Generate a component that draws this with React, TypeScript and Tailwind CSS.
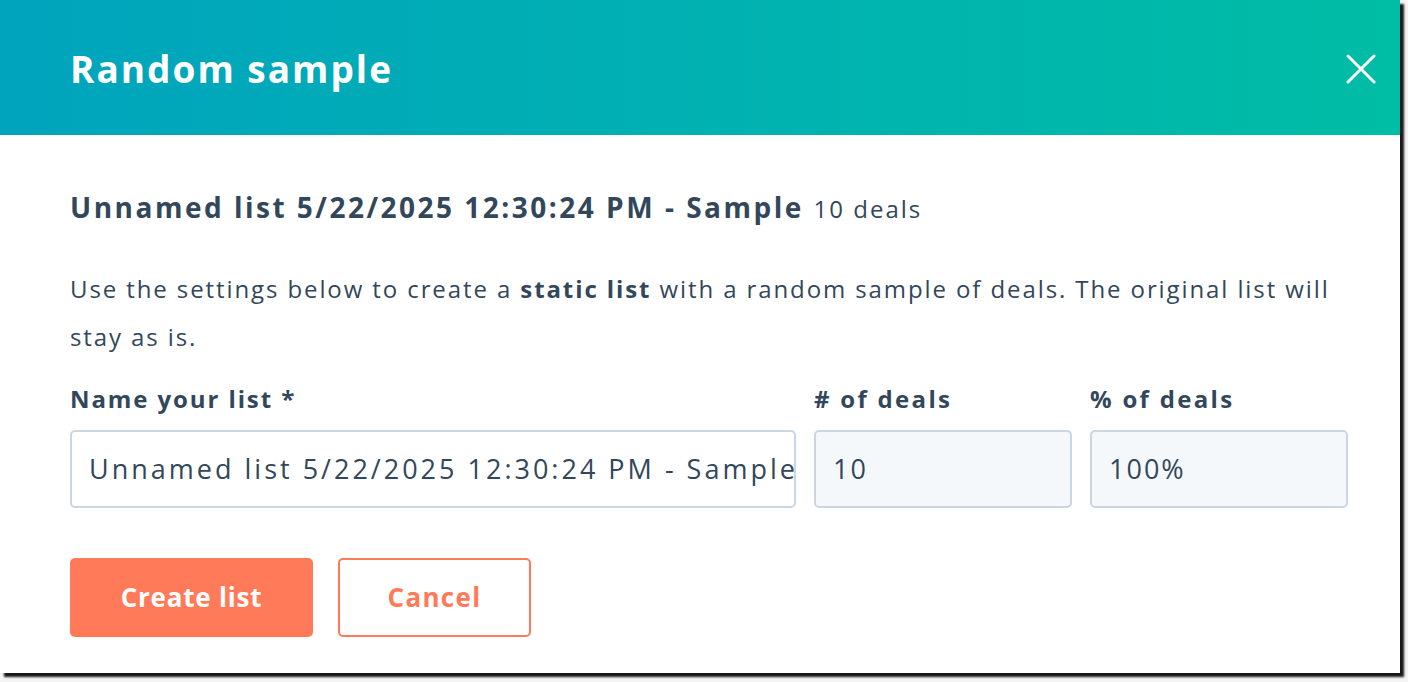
const font = { fontFamily: '"Open Sans", "Noto Sans", sans-serif' };

const CloseIcon = () => (
  <svg width="30" height="30" viewBox="0 0 30 30" fill="none" stroke="white" strokeWidth="3" strokeLinecap="round">
    <line x1="2" y1="2" x2="28" y2="28" />
    <line x1="28" y1="2" x2="2" y2="28" />
  </svg>
);

const App = () => {
  return (
    <div className="w-[1408px] h-[682px] bg-[#f4f4f4]" style={font}>
      <div className="w-[1400px] h-[673px] bg-white flex flex-col shadow-[4px_4px_2px_rgba(0,0,0,0.9)]">
        {/* Header */}
        <header className="h-[135px] shrink-0 flex items-center justify-between pl-[70px] pr-[24px] pt-[2px] bg-gradient-to-r from-[#00a4bd] to-[#00bda5]">
          <h1 className="text-[37px] font-bold text-white tracking-[2px]">Random sample</h1>
          <CloseIcon />
        </header>

        {/* Body */}
        <div className="pl-[70px] pr-[52px] pt-[54px] text-[#33475b]">
          <h2 className="text-[28px] font-bold leading-[36px] tracking-[2.5px] whitespace-nowrap">
            Unnamed list 5/22/2025 12:30:24 PM - Sample{' '}
            <span className="text-[24px] font-normal tracking-[2px]">10 deals</span>
          </h2>

          <p className="mt-[38px] text-[24px] leading-[48px] tracking-[1.9px]">
            Use the settings below to create a <span className="font-bold">static list</span> with a random sample of deals. The original list will stay as is.
          </p>

          <div className="mt-[22px] grid grid-cols-[726px_258px_258px] gap-x-[18px]">
            <div className="flex flex-col">
              <label className="text-[24px] font-bold leading-[32px] mb-[15px] tracking-[1.9px]">Name your list *</label>
              <div className="h-[78px] rounded-[5px] border-2 border-[#cbd6e2] bg-white flex items-center px-[17px] overflow-hidden">
                <span className="text-[27px] whitespace-nowrap tracking-[3px]">Unnamed list 5/22/2025 12:30:24 PM - Sample</span>
              </div>
            </div>
            <div className="flex flex-col">
              <label className="text-[24px] font-bold leading-[32px] mb-[15px] tracking-[2.3px]"># of deals</label>
              <div className="h-[78px] rounded-[5px] border-2 border-[#cbd6e2] bg-[#f5f8fa] flex items-center px-[17px]">
                <span className="text-[27px] tracking-[2px]">10</span>
              </div>
            </div>
            <div className="flex flex-col">
              <label className="text-[24px] font-bold leading-[32px] mb-[15px] tracking-[2.3px]">% of deals</label>
              <div className="h-[78px] rounded-[5px] border-2 border-[#cbd6e2] bg-[#f5f8fa] flex items-center px-[17px]">
                <span className="text-[27px] tracking-[2px]">100%</span>
              </div>
            </div>
          </div>

          <div className="mt-[50px] flex gap-[25px]">
            <button className="w-[243px] h-[79px] rounded-[5px] bg-[#ff7a59] text-white text-[26px] font-bold tracking-[0.8px]">
              Create list
            </button>
            <button className="w-[193px] h-[79px] rounded-[5px] border-2 border-[#ff7a59] bg-white text-[#ff7a59] text-[26px] font-bold tracking-[1.3px]">
              Cancel
            </button>
          </div>
        </div>
      </div>
    </div>
  );
};

export default App;
